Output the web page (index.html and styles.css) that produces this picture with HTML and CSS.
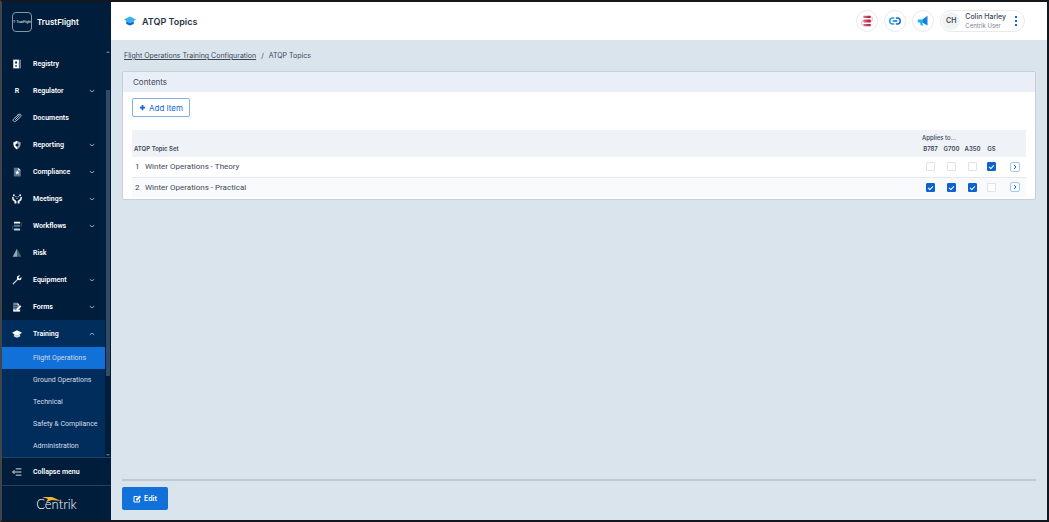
FILE: index.html
```html
<!DOCTYPE html>
<html lang="en">
<head>
    <meta charset="utf-8">
    <title>ATQP Topics</title>
    <link rel="stylesheet" href="styles.css">
</head>
<body>
    <aside class="sidebar">
        <div class="brand">
            <span class="brand-logo">T· TrustFlight</span>
            <span class="brand-name">TrustFlight</span>
        </div>
        <div class="menu-area">
            <nav class="menu">
                <a class="item" href="#">
                    <svg class="icon" viewBox="0 0 16 16"><path fill="#fff" d="M2 1h9v14H2z"/><path fill="#8fa3b8" d="M12 1h2v14h-2z"/><path fill="#001e3c" d="M5 4h3v3H5zM5 10h3v2H5z"/></svg>
                    <span>Registry</span>
                </a>
                <a class="item" href="#">
                    <span class="icon letter">R</span>
                    <span>Regulator</span>
                    <svg class="chevron" viewBox="0 0 8 8"><path d="M1 3l3 2 3-2"/></svg>
                </a>
                <a class="item" href="#">
                    <svg class="icon" viewBox="0 0 16 16"><path fill="none" stroke="#b9c5d2" stroke-width="1.5" d="M5 11l6-6c2-2 0-3-1-2L3 9c-3 3 0 6 3 4l7-6c3-3 1-6-2-5L8 4"/></svg>
                    <span>Documents</span>
                </a>
                <a class="item" href="#">
                    <svg class="icon" viewBox="0 0 16 16"><path fill="#fff" d="M8 1v4L5 8l3 3v4C4 13 2 10 2 4z"/><path fill="#8fa3b8" d="M8 1l6 3c0 6-2 9-6 11v-4l3-3-3-3z"/></svg>
                    <span>Reporting</span>
                    <svg class="chevron" viewBox="0 0 8 8"><path d="M1 3l3 2 3-2"/></svg>
                </a>
                <a class="item" href="#">
                    <svg class="icon" viewBox="0 0 16 16"><path fill="#5f758d" d="M3 1h7l4 4v10H3z"/><path fill="#fff" d="M10 1l4 4h-4zM8.5 5l1 2.500H12l-2 2 1 3-2.500-2-2.500 2 1-3-2-2h2.500z"/></svg>
                    <span>Compliance</span>
                    <svg class="chevron" viewBox="0 0 8 8"><path d="M1 3l3 2 3-2"/></svg>
                </a>
                <a class="item" href="#">
                    <svg class="icon" viewBox="0 0 16 16"><path fill="#fff" d="M0 5l2-1 1 4 4 3v4H4v-3L1 10zM16 5l-2-1-1 4-4 3v4h3v-3l3-2z"/><circle cx="3" cy="2" r="1.500" fill="#fff"/><circle cx="13" cy="2" r="1.500" fill="#fff"/><path fill="#8fa3b8" d="M5 3h2v2H5zM9 3h2v2H9zM7 6h2v2H7z"/></svg>
                    <span>Meetings</span>
                    <svg class="chevron" viewBox="0 0 8 8"><path d="M1 3l3 2 3-2"/></svg>
                </a>
                <a class="item" href="#">
                    <svg class="icon" viewBox="0 0 16 16"><rect x="3" y="1" width="10" height="3" rx="1" fill="#fff"/><rect x="3" y="6" width="10" height="3" rx="1" fill="#5f758d"/><rect x="3" y="12" width="10" height="3" rx="1" fill="#c5cfda"/><path fill="none" stroke="#4a617a" d="M13 3h2v5h-2M3 8H1v5h2"/></svg>
                    <span>Workflows</span>
                    <svg class="chevron" viewBox="0 0 8 8"><path d="M1 3l3 2 3-2"/></svg>
                </a>
                <a class="item" href="#">
                    <svg class="icon" viewBox="0 0 16 16"><path fill="#9aa9b9" d="M8 1v13H1z"/><path fill="#4a617a" d="M8 1l7 13H8z"/></svg>
                    <span>Risk</span>
                </a>
                <a class="item" href="#">
                    <svg class="icon" viewBox="0 0 16 16"><path fill="none" stroke="#c5cfda" stroke-width="2" stroke-linecap="round" d="M2 14l7-7"/><path fill="#fff" d="M13 1L10 4l2 2 3-3c1 4-2 6-5 5L8 7C7 3 9 0 13 1z"/></svg>
                    <span>Equipment</span>
                    <svg class="chevron" viewBox="0 0 8 8"><path d="M1 3l3 2 3-2"/></svg>
                </a>
                <a class="item" href="#">
                    <svg class="icon" viewBox="0 0 16 16"><path fill="#71869e" d="M2 1h7l3 4v10H2z"/><path fill="none" stroke="#001e3c" d="M4 6h5M4 9h4"/><path fill="#fff" d="M9 1l3 4H9zM7 11l6-6 2 2-6 6H7zM2 12h3l1 2 7-2v3H2z"/></svg>
                    <span>Forms</span>
                    <svg class="chevron" viewBox="0 0 8 8"><path d="M1 3l3 2 3-2"/></svg>
                </a>
                <a class="item open" href="#">
                    <svg class="icon" viewBox="0 0 16 16"><path fill="#fff" d="M8 2l8 4-8 5-8-5z"/><path fill="#d5dee8" d="M3 8l5 3 5-3v4l-5 2-5-2z"/></svg>
                    <span>Training</span>
                    <svg class="chevron" viewBox="0 0 8 8"><path d="M1 5l3-2 3 2"/></svg>
                </a>
                <div class="submenu">
                    <a class="active" href="#">Flight Operations</a>
                    <a href="#">Ground Operations</a>
                    <a href="#">Technical</a>
                    <a href="#">Safety &amp; Compliance</a>
                    <a href="#">Administration</a>
                </div>
            </nav>
            <div class="scrollbar">
                <svg viewBox="0 0 4 4"><path d="M0 3l2-2 2 2z"/></svg>
                <div class="thumb"></div>
                <svg viewBox="0 0 4 4"><path d="M0 1l2 2 2-2z"/></svg>
            </div>
        </div>
        <button class="collapse">
            <svg class="icon" viewBox="0 0 16 16"><path fill="none" stroke="#dfe6ee" stroke-width="1.500" d="M6 3h9M1 8h14M6 13h9M4 5L1 8l3 3"/></svg>
            <span>Collapse menu</span>
        </button>
        <div class="centrik">
            <svg class="swoosh" viewBox="0 0 20 8"><path fill="#f3b43c" d="M0 1l10 0 9 4-9-1-6 2 2-3z"/></svg>
            Centrik
        </div>
    </aside>

    <div class="page">
        <header class="topbar">
            <svg class="title-icon" viewBox="0 0 16 16"><path fill="#35b1f2" d="M8 2l8 4-8 5-8-5z"/><path fill="#1165cf" d="M3 8l5 3 5-3v4l-5 2-5-2z"/></svg>
            <h1>ATQP Topics</h1>
            <div class="tools">
                <button class="round" aria-label="Workflows">
                    <svg viewBox="0 0 16 16">
                        <defs><linearGradient id="red"><stop offset="0" stop-color="#d9798b"/><stop offset="1" stop-color="#b00d2e"/></linearGradient></defs>
                        <g fill="url(#red)"><rect x="3" y="1" width="10" height="3" rx="1"/><rect x="3" y="6" width="10" height="4" rx="1"/><rect x="3" y="12" width="10" height="3" rx="1"/></g>
                        <path fill="none" stroke="#e3a3af" d="M13 3h2v5h-2M3 8H1v5h2"/>
                    </svg>
                </button>
                <button class="round" aria-label="Links">
                    <svg viewBox="0 0 16 16"><path fill="none" stroke="#15a5e8" stroke-width="2" d="M7 4H5a4 4 0 0 0 0 8h2"/><path fill="none" stroke="#126bd5" stroke-width="2" d="M9 4h2a4 4 0 0 1 0 8H9M5 8h6"/></svg>
                </button>
                <button class="round" aria-label="Announcements">
                    <svg viewBox="0 0 16 16"><path fill="#17b4f0" d="M1 6h6v4l1 4H5l-1-4H1z"/><path fill="#1282dd" d="M7 6l7-5v13l-7-4z"/></svg>
                </button>
                <button class="user">
                    <span class="avatar">CH</span>
                    <span class="who"><b>Colin Harley</b><small>Centrik User</small></span>
                    <svg class="dots" viewBox="0 0 4 12"><path fill="#1268d3" d="M1 1h2v2H1zM1 5h2v2H1zM1 9h2v2H1z"/></svg>
                </button>
            </div>
        </header>

        <main class="content">
            <div class="breadcrumb">
                <a href="#">Flight Operations Training Configuration</a><i>/</i><span>ATQP Topics</span>
            </div>

            <section class="panel">
                <h2>Contents</h2>
                <div class="panel-body">
                    <button class="add"><svg viewBox="0 0 8 8"><path stroke="#1268d3" stroke-width="2" d="M4 1v6M1 4h6"/></svg>Add Item</button>
                    <table class="topics">
                        <thead>
                            <tr class="group"><th colspan="2"></th><th colspan="4">Applies to...</th><th></th></tr>
                            <tr><th colspan="2">ATQP Topic Set</th><th class="check">B787</th><th class="check">G700</th><th class="check">A350</th><th class="check gs">GS</th><th class="go"></th></tr>
                        </thead>
                        <tbody>
                            <tr>
                                <td class="num">1</td>
                                <td>Winter Operations - Theory</td>
                                <td class="check"><input type="checkbox" aria-label="B787"></td>
                                <td class="check"><input type="checkbox" aria-label="G700"></td>
                                <td class="check"><input type="checkbox" aria-label="A350"></td>
                                <td class="check gs"><input type="checkbox" aria-label="GS" checked></td>
                                <td class="go"><button aria-label="Open"><svg viewBox="0 0 8 8"><path d="M3 2l2 2-2 2"/></svg></button></td>
                            </tr>
                            <tr>
                                <td class="num">2</td>
                                <td>Winter Operations - Practical</td>
                                <td class="check"><input type="checkbox" aria-label="B787" checked></td>
                                <td class="check"><input type="checkbox" aria-label="G700" checked></td>
                                <td class="check"><input type="checkbox" aria-label="A350" checked></td>
                                <td class="check gs"><input type="checkbox" aria-label="GS"></td>
                                <td class="go"><button aria-label="Open"><svg viewBox="0 0 8 8"><path d="M3 2l2 2-2 2"/></svg></button></td>
                            </tr>
                        </tbody>
                    </table>
                </div>
            </section>

            <footer class="actions">
                <button class="edit"><svg viewBox="0 0 16 16"><path fill="none" stroke="#fff" stroke-width="2" d="M9 3H2v11h11V9"/><path fill="#fff" d="M6 8l7-7 3 3-7 7H6z"/></svg>Edit</button>
            </footer>
        </main>
    </div>
</body>
</html>
```
FILE: styles.css
```css
* {
    box-sizing: border-box;
}
body {
    margin: 0;
    height: 100vh;
    display: flex;
    border: 2px solid #14181e;
    border-left-color: #414449;
    font-family: Inter, "Liberation Sans", sans-serif;
    font-size: 7px;
    color: #3c4858;
    background-color: #dae4ec;
}
button {
    font: inherit;
    color: inherit;
    padding: 0;
    border: none;
    background: none;
    cursor: pointer;
}
a {
    color: inherit;
}

/* sidebar */
.sidebar {
    width: 109px;
    flex: none;
    display: flex;
    flex-direction: column;
    background-color: #001e3c;
    color: #fff;
    font-family: Roboto, Inter, sans-serif;
}
.brand {
    height: 48px;
    padding: 10px 10px 0;
    display: flex;
    align-items: flex-start;
    gap: 5px;
}
.brand-logo {
    width: 20px;
    height: 20px;
    border: 1px solid #8795a6;
    border-radius: 4px;
    font-size: 3px;
    line-height: 18px;
    text-align: center;
    white-space: nowrap;
    overflow: hidden;
}
.brand-name {
    font-family: Inter, sans-serif;
    font-size: 8px;
    font-weight: 600;
    line-height: 20px;
}
.menu-area {
    flex: 1;
    min-height: 0;
    display: flex;
}
.menu {
    flex: 1;
    overflow: hidden;
}
.menu a {
    display: flex;
    align-items: center;
    text-decoration: none;
}
.item {
    height: 27px;
    padding: 0 10px;
    font-weight: 600;
}
.icon {
    width: 10px;
    height: 10px;
    margin-right: 11px;
    flex: none;
}
.letter {
    line-height: 10px;
    text-align: center;
}
.chevron {
    width: 6px;
    height: 6px;
    margin-left: auto;
    fill: none;
    stroke: #c5cfda;
}
.open {
    background-color: #002d5c;
}
.submenu {
    background-color: #002d5c;
    color: #d5dee8;
}
.submenu a {
    height: 22px;
    padding-left: 31px;
    white-space: nowrap;
}
.submenu .active {
    background-color: #1270d9;
}
.scrollbar {
    width: 6px;
    padding: 0 1px;
    display: flex;
    flex-direction: column;
    justify-content: space-between;
}
.scrollbar svg {
    width: 4px;
    height: 4px;
    fill: #5f758d;
}
.thumb {
    height: 286px;
    margin-bottom: 42px;
    background-color: #334b66;
}
.collapse {
    height: 28px;
    padding: 0 10px;
    display: flex;
    align-items: center;
    border-top: 1px solid #23405e;
    font-weight: 600;
}
.centrik {
    height: 35px;
    position: relative;
    border-top: 1px solid #23405e;
    font-family: Lato, sans-serif;
    font-size: 13px;
    font-weight: 300;
    line-height: 36px;
    text-align: center;
}
.swoosh {
    position: absolute;
    left: 40px;
    top: 10px;
    width: 20px;
    height: 8px;
}

/* header */
.page {
    flex: 1;
    display: flex;
    flex-direction: column;
}
.topbar {
    height: 38px;
    padding: 0 22px 0 13px;
    display: flex;
    align-items: center;
    background-color: #fff;
}
.title-icon {
    width: 12px;
    height: 12px;
    margin-right: 6px;
}
h1 {
    margin: 0;
    font-size: 9px;
    font-weight: 600;
    color: #2b3644;
}
.tools {
    margin-left: auto;
    display: flex;
    gap: 6px;
}
.round {
    width: 22px;
    height: 22px;
    display: flex;
    align-items: center;
    justify-content: center;
    border: 1px solid #e8eaee;
    border-radius: 50%;
}
.round svg {
    width: 12px;
    height: 12px;
}
.user {
    height: 22px;
    padding: 0 6px 0 1px;
    display: flex;
    align-items: center;
    border: 1px solid #e8eaee;
    border-radius: 11px;
    text-align: left;
}
.avatar {
    width: 18px;
    margin-right: 5px;
    border-radius: 50%;
    background-color: #f1f2f4;
    line-height: 18px;
    text-align: center;
    font-weight: 600;
}
.who b, .who small {
    display: block;
    font-size: 7px;
    font-weight: 500;
    line-height: 9px;
}
.who small {
    font-size: 6px;
    font-weight: 400;
    color: #7b8592;
}
.dots {
    width: 4px;
    height: 12px;
    margin-left: 8px;
}

/* content */
.content {
    flex: 1;
    padding: 10px 11px;
    display: flex;
    flex-direction: column;
}
.breadcrumb {
    padding-left: 2px;
    line-height: 11px;
}
.breadcrumb i {
    margin: 0 5px;
    font-style: normal;
}
.panel {
    margin-top: 10px;
    border: 1px solid #c5d0da;
    border-radius: 2px;
    background-color: #fff;
}
h2 {
    margin: 0;
    padding-left: 10px;
    background-color: #eaeff7;
    font-size: 8px;
    font-weight: 400;
    line-height: 20px;
}
.panel-body {
    padding: 6px 9px 2px;
}
.add {
    height: 19px;
    padding: 0 6px;
    display: flex;
    align-items: center;
    gap: 3px;
    border: 1px solid #7fb0e8;
    border-radius: 2px;
    color: #1268d3;
    font-size: 8px;
}
.add svg {
    width: 7px;
    height: 7px;
}
.topics {
    width: 100%;
    margin-top: 13px;
    border-collapse: collapse;
}
.topics th {
    height: 13px;
    padding: 0 2px;
    background-color: #eff2f7;
    font-size: 6px;
    font-weight: 600;
    line-height: 9px;
    text-align: left;
    vertical-align: top;
}
.topics .group th {
    height: 14px;
    font-weight: 500;
    vertical-align: middle;
}
.topics td {
    height: 20px;
    padding: 0;
    font-family: Roboto, Inter, sans-serif;
    font-size: 8px;
}
.topics tbody tr + tr {
    border-top: 1px solid #e3e8ee;
    background-color: #f8fafc;
}
.topics .num {
    width: 13px;
    padding-left: 3px;
}
.topics .check {
    width: 21px;
    padding: 0;
    text-align: center;
}
.topics .gs {
    width: 17px;
}
.topics .go {
    width: 26px;
    padding: 0 0 0 4px;
}
.check input {
    appearance: none;
    width: 9px;
    height: 9px;
    margin: 0;
    display: inline-block;
    vertical-align: middle;
    border: 1px solid #dfe2e6;
    border-radius: 1px;
    background-color: #fff;
}
.check input:checked {
    border-color: #0b62d0;
    background-color: #0b62d0;
}
.check input:checked::before {
    content: "";
    display: block;
    width: 4px;
    height: 2px;
    margin: 2px 1px;
    border: solid #fff;
    border-width: 0 0 1px 1px;
    transform: rotate(-45deg);
}
.go button {
    width: 10px;
    height: 10px;
    display: block;
    margin: 0 auto;
    border: 1px solid #a8caf0;
    border-radius: 2px;
}
.go svg {
    display: block;
    width: 8px;
    height: 8px;
    fill: none;
    stroke: #1268d3;
}
.actions {
    margin-top: auto;
    padding-top: 6px;
    border-top: 2px solid #bec9d4;
}
.edit {
    height: 23px;
    padding: 0 11px;
    display: flex;
    align-items: center;
    gap: 3px;
    border-radius: 2px;
    background-color: #1270d9;
    color: #fff;
    font-weight: 600;
}
.edit svg {
    width: 8px;
    height: 8px;
}
```
